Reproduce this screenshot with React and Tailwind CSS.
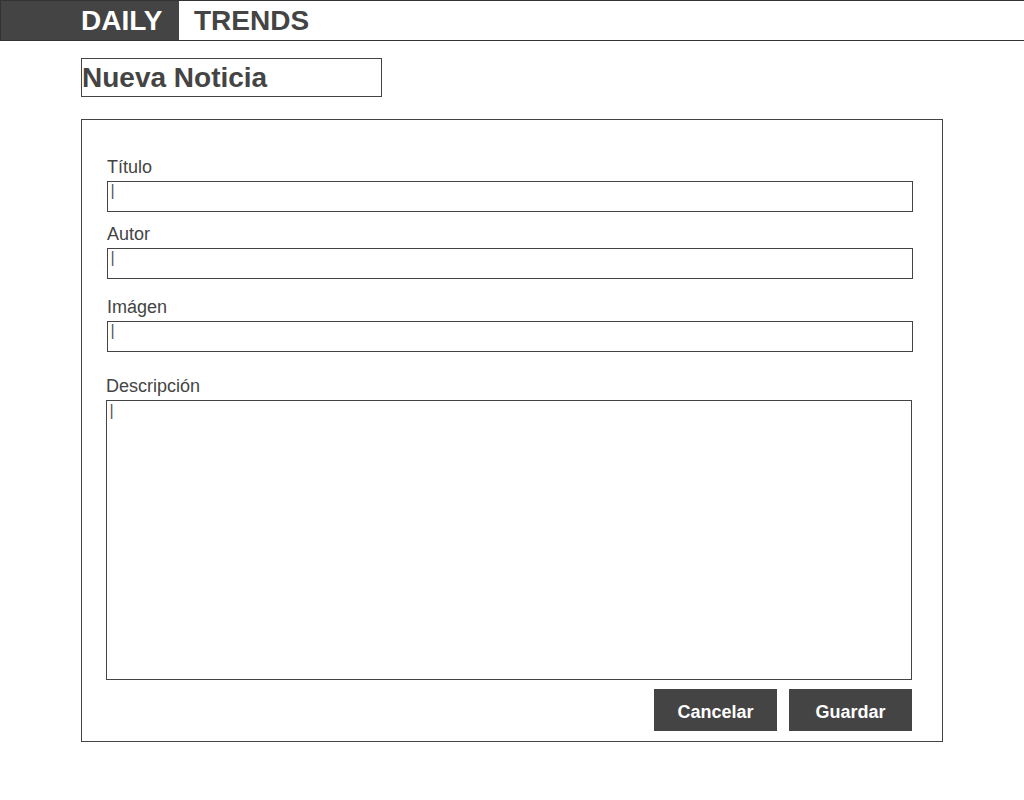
export default function App() {
  const font = { fontFamily: '"Liberation Sans", Arial, sans-serif' };
  const Cursor = () => (
    <span className="block pl-[2.5px] pt-[1px] text-[16px] leading-none text-[#555] antialiased">|</span>
  );
  return (
    <div className="min-h-[800px] w-[1024px] bg-white text-[#444]" style={font}>
      <header className="flex h-[41px] border-y border-l border-[#333]">
        <div className="flex w-[178px] items-center bg-[#444] pl-[80px] text-[28px] font-bold leading-[39px] text-white">
          DAILY
        </div>
        <div className="flex items-center pl-[15px] text-[28px] font-bold leading-[39px] text-[#444]">
          TRENDS
        </div>
      </header>

      <main className="ml-[81px] pt-[17px]">
        <div className="h-[39px] w-[301px] border border-[#444] text-[28px] font-bold leading-[37px] text-[#444]">
          Nueva Noticia
        </div>

        <div className="mt-[22px] h-[623px] w-[862px] border border-[#444] pl-[25px] pt-[37px]">
          <div className="flex w-[806px] flex-col">
            <label className="text-[18px] leading-[21px]">Título</label>
            <div className="mt-[3px] h-[31px] border border-[#444]">
              <Cursor />
            </div>

            <label className="mt-[12px] text-[18px] leading-[21px]">Autor</label>
            <div className="mt-[3px] h-[31px] border border-[#444]">
              <Cursor />
            </div>

            <label className="mt-[18px] text-[18px] leading-[21px]">Imágen</label>
            <div className="mt-[3px] h-[31px] border border-[#444]">
              <Cursor />
            </div>
          </div>

          <div className="-ml-[1px] flex w-[806px] flex-col">
            <label className="mt-[24px] text-[18px] leading-[21px]">Descripción</label>
            <div className="mt-[3px] h-[280px] border border-[#444]">
              <span className="block pl-[2.5px] pt-[2px] text-[16px] leading-none text-[#555] antialiased">|</span>
            </div>
            <div className="mt-[9px] flex justify-end gap-[12px]">
              <button className="h-[42px] w-[123px] bg-[#444] pt-[4px] text-[18px] font-bold text-white">
                Cancelar
              </button>
              <button className="h-[42px] w-[123px] bg-[#444] pt-[4px] text-[18px] font-bold text-white">
                Guardar
              </button>
            </div>
          </div>
        </div>
      </main>
    </div>
  );
}
